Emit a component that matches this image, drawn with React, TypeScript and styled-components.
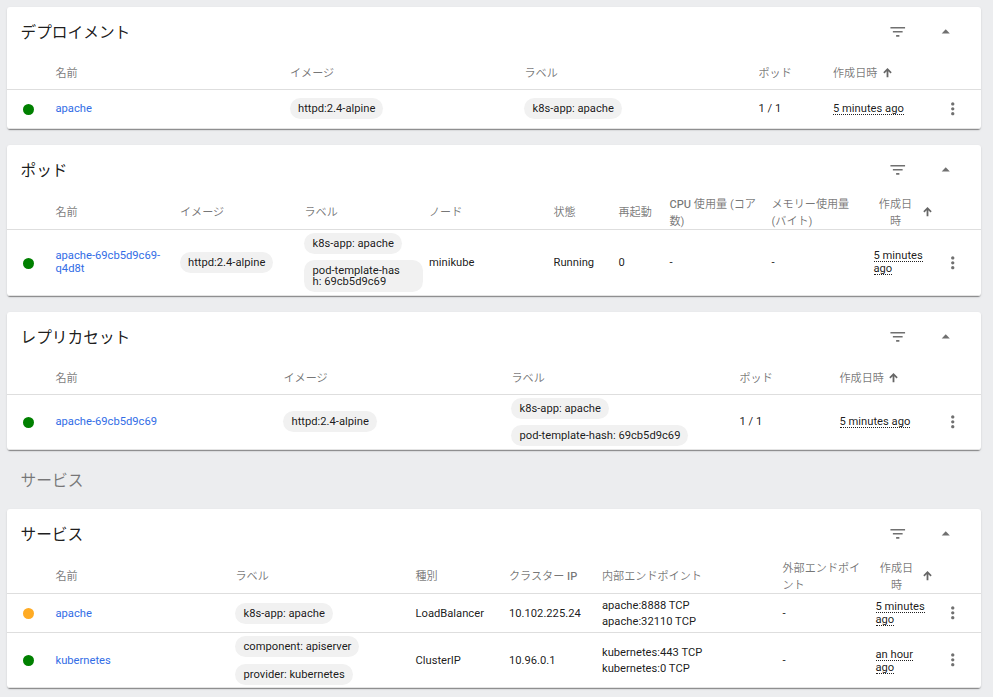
import React from "react";
import styled, { createGlobalStyle } from "styled-components";
import { MdArrowDropUp, MdFilterList, MdMoreVert } from "react-icons/md";

const GlobalStyle = createGlobalStyle`
  * { box-sizing: border-box; }
  body {
    margin: 0;
    background: #ecedef;
    color: rgba(0, 0, 0, 0.9);
    font-family: Roboto, "Noto Sans CJK JP", sans-serif;
    font-size: 11.2px;
    line-height: 13px;
    overflow: hidden;
  }
`;

const Page = styled.main`
  width: 993px;
  height: 697px;
  padding: 7px 12px 0 7px;
  display: flex;
  flex-direction: column;
  overflow: hidden;
`;

const Card = styled.section<{ $gap?: number }>`
  flex: none;
  margin-bottom: ${(p) => p.$gap ?? 16}px;
  background: #fff;
  border-radius: 3px;
  box-shadow: 0 2px 1px -1px rgba(0, 0, 0, 0.3), 0 1px 1px 0 rgba(0, 0, 0, 0.14),
    0 1px 3px 0 rgba(0, 0, 0, 0.08);
`;

const Toolbar = styled.header`
  display: flex;
  align-items: center;
  height: 49px;
  padding: 0 26px 0.5px 13.5px;
`;

const Title = styled.h2`
  flex: 1;
  margin: 0;
  padding-top: 3px;
  font-size: 15.7px;
  font-weight: 400;
  line-height: 24px;
`;

const SectionTitle = styled.h1`
  flex: none;
  margin: 0;
  height: 59px;
  padding: 1px 13.5px 0;
  font-size: 15.75px;
  font-weight: 400;
  line-height: 60px;
  color: rgba(0, 0, 0, 0.5);
`;

const IconButton = styled.button<{ $gap?: number }>`
  display: flex;
  align-items: center;
  justify-content: center;
  width: 19.5px;
  height: 19.5px;
  margin: 0 0 0 ${(p) => p.$gap ?? 0}px;
  padding: 0;
  border: 0;
  background: none;
  color: #707070;
  font-size: 19.5px;
`;

const Row = styled.div<{ $columns: string; $height: number }>`
  display: grid;
  grid-template-columns: ${(p) => p.$columns};
  align-items: center;
  height: ${(p) => p.$height}px;
  border-bottom: 1px solid #dedede;

  &:last-child {
    border-bottom-color: #e4e4e4;
    border-radius: 0 0 3px 3px;
  }
`;

const HeadRow = styled(Row)`
  color: rgba(0, 0, 0, 0.54);
  font-size: 11.1px;
  font-weight: 400;
  line-height: 17px;
`;

const Cell = styled.div<{ $raised?: boolean }>`
  min-width: 0;
  padding-bottom: ${(p) => (p.$raised ? 1 : 0)}px;
  white-space: pre-line;
`;

const HeadCell = styled(Cell)`
  margin: 1.5px 0 0;
`;

const Latin = styled.span`
  font-weight: 500;
`;

const Endpoints = styled(Cell)`
  padding-top: 2px;
  line-height: 16px;
`;

const MenuCell = styled(Cell)`
  display: flex;
  justify-content: flex-end;
  padding: 0 19px 0.5px 0;
`;

const Dot = styled.span<{ $color: string }>`
  display: block;
  width: 11px;
  height: 11px;
  margin: 1px 0 0 15.7px;
  border-radius: 50%;
  background: ${(p) => p.$color};
`;

const Link = styled.a`
  color: #326de6;
`;

const Chips = styled.div<{ $raised?: boolean; $gap: number }>`
  display: flex;
  flex-direction: column;
  align-items: flex-start;
  gap: ${(p) => p.$gap}px;
  margin-left: -0.5px;
  padding-bottom: ${(p) => (p.$raised ? 1 : 0)}px;
`;

const Chip = styled.span`
  padding: 5px 8px 5px 8.5px;
  border-radius: 10.5px;
  background: #f1f1f1;
  line-height: 11px;
  white-space: pre;
`;

const WideChip = styled(Chip)`
  width: 119px;
`;

const Age = styled.span`
  display: table;
  height: 12px;
  border-bottom: 1px dotted rgba(0, 0, 0, 0.87);
  line-height: 11px;
`;

const AgeLine = styled(Age)`
  margin-bottom: 1px;
`;

const AgeStack = styled(Cell)<{ $drop: number }>`
  padding-top: ${(p) => p.$drop}px;
`;

const SortHead = styled(Cell)`
  display: flex;
  align-items: center;
  white-space: nowrap;
`;

const SortLabel = styled.span<{ $width: number }>`
  min-width: ${(p) => p.$width}px;
  padding-top: 2px;
  text-align: center;
  white-space: pre-line;
`;

const SortIcon = styled.svg`
  flex: none;
  width: 9px;
  height: 10px;
  margin-left: 5.5px;
  fill: #666;
`;

const SortArrow = () => (
  <SortIcon viewBox="0 0 9 10">
    <path d="M4.5 0 8.7 4.2 7.5 5.4 5.4 3.3V9.3H3.6V3.3L1.5 5.4 0.3 4.2Z" />
  </SortIcon>
);

const Tools = ({ title }: { title: string }) => (
  <Toolbar>
    <Title>{title}</Title>
    <IconButton aria-label="フィルター">
      <MdFilterList />
    </IconButton>
    <IconButton $gap={28.5} aria-label="折りたたむ">
      <MdArrowDropUp />
    </IconButton>
  </Toolbar>
);

const Menu = () => (
  <MenuCell>
    <IconButton aria-label="メニュー">
      <MdMoreVert />
    </IconButton>
  </MenuCell>
);

const Status = ({ color = "#008000" }: { color?: string }) => (
  <Cell>
    <Dot $color={color} />
  </Cell>
);

interface LabelsProps {
  items: string[];
  raised?: boolean;
  gap?: number;
}

const Labels = ({ items, raised, gap = 6 }: LabelsProps) => (
  <Chips $raised={raised} $gap={gap}>
    {items.map((t) =>
      t.includes("\n") ? <WideChip key={t}>{t}</WideChip> : <Chip key={t}>{t}</Chip>
    )}
  </Chips>
);

interface HeadProps {
  columns: string;
  height: number;
  names: string[];
  created: string;
  labelWidth?: number;
}

const Head = ({ columns, height, names, created, labelWidth = 44 }: HeadProps) => (
  <HeadRow $columns={columns} $height={height}>
    <Cell />
    {names.map((n) => (
      <HeadCell key={n}>
        {n.split(/([A-Z]+)/).map((part, i) => (i % 2 ? <Latin key={i}>{part}</Latin> : part))}
      </HeadCell>
    ))}
    <SortHead>
      <SortLabel $width={labelWidth}>{created}</SortLabel>
      <SortArrow />
    </SortHead>
  </HeadRow>
);

const StackedAge = ({ lines, drop = 0 }: { lines: string[]; drop?: number }) => (
  <AgeStack $drop={drop}>
    {lines.map((l) => (
      <AgeLine key={l}>{l}</AgeLine>
    ))}
  </AgeStack>
);

const deployCols = "48.5px 234.5px 234.5px 234px 74.5px 1fr 60px";
const podCols = "48.5px 124.5px 124.5px 124.5px 124.5px 65px 51px 102px 102px 1fr 48px";
const replicaCols = "48.5px 228px 228px 228px 100px 1fr 48px";
const serviceCols = "48.5px 180px 180px 93.5px 93px 180.5px 93px 1fr 48px";

export default function App() {
  return (
    <>
      <GlobalStyle />
      <Page>
        <Card>
          <Tools title="デプロイメント" />
          <Head
            columns={deployCols}
            height={34}
            names={["名前", "イメージ", "ラベル", "ポッド"]}
            created="作成日時"
          />
          <Row $columns={deployCols} $height={39}>
            <Status />
            <Cell $raised><Link>apache</Link></Cell>
            <Labels raised items={["httpd:2.4-alpine"]} />
            <Labels raised items={["k8s-app: apache"]} />
            <Cell $raised>1 / 1</Cell>
            <Cell><Age>5 minutes ago</Age></Cell>
            <Menu />
          </Row>
        </Card>

        <Card>
          <Tools title="ポッド" />
          <Head
            columns={podCols}
            height={36}
            names={[
              "名前",
              "イメージ",
              "ラベル",
              "ノード",
              "状態",
              "再起動",
              "CPU 使用量 (コア\n数)",
              "メモリー使用量\n(バイト)",
            ]}
            created={"作成日\n時"}
          />
          <Row $columns={podCols} $height={66}>
            <Status />
            <Cell $raised><Link>{"apache-69cb5d9c69-\nq4d8t"}</Link></Cell>
            <Labels items={["httpd:2.4-alpine"]} />
            <Labels items={["k8s-app: apache", "pod-template-has\nh: 69cb5d9c69"]} />
            <Cell>minikube</Cell>
            <Cell>Running</Cell>
            <Cell>0</Cell>
            <Cell>-</Cell>
            <Cell>-</Cell>
            <StackedAge lines={["5 minutes", "ago"]} />
            <Menu />
          </Row>
        </Card>

        <Card $gap={0}>
          <Tools title="レプリカセット" />
          <Head
            columns={replicaCols}
            height={34}
            names={["名前", "イメージ", "ラベル", "ポッド"]}
            created="作成日時"
          />
          <Row $columns={replicaCols} $height={55}>
            <Status />
            <Cell $raised><Link>apache-69cb5d9c69</Link></Cell>
            <Labels raised items={["httpd:2.4-alpine"]} />
            <Labels items={["k8s-app: apache", "pod-template-hash: 69cb5d9c69"]} />
            <Cell $raised>1 / 1</Cell>
            <Cell><Age>5 minutes ago</Age></Cell>
            <Menu />
          </Row>
        </Card>

        <SectionTitle>サービス</SectionTitle>

        <Card>
          <Tools title="サービス" />
          <Head
            columns={serviceCols}
            height={36}
            labelWidth={42}
            names={[
              "名前",
              "ラベル",
              "種別",
              "クラスター IP",
              "内部エンドポイント",
              "外部エンドポイ\nント",
            ]}
            created={"作成日\n時"}
          />
          <Row $columns={serviceCols} $height={39}>
            <Status color="#ffab24" />
            <Cell><Link>apache</Link></Cell>
            <Labels items={["k8s-app: apache"]} />
            <Cell>LoadBalancer</Cell>
            <Cell>10.102.225.24</Cell>
            <Endpoints>{"apache:8888 TCP\napache:32110 TCP"}</Endpoints>
            <Cell>-</Cell>
            <StackedAge lines={["5 minutes", "ago"]} drop={2} />
            <Menu />
          </Row>
          <Row $columns={serviceCols} $height={55}>
            <Status />
            <Cell><Link>kubernetes</Link></Cell>
            <Labels gap={7} items={["component: apiserver", "provider: kubernetes"]} />
            <Cell>ClusterIP</Cell>
            <Cell>10.96.0.1</Cell>
            <Endpoints>{"kubernetes:443 TCP\nkubernetes:0 TCP"}</Endpoints>
            <Cell>-</Cell>
            <StackedAge lines={["an hour", "ago"]} drop={3} />
            <Menu />
          </Row>
        </Card>
      </Page>
    </>
  );
}
